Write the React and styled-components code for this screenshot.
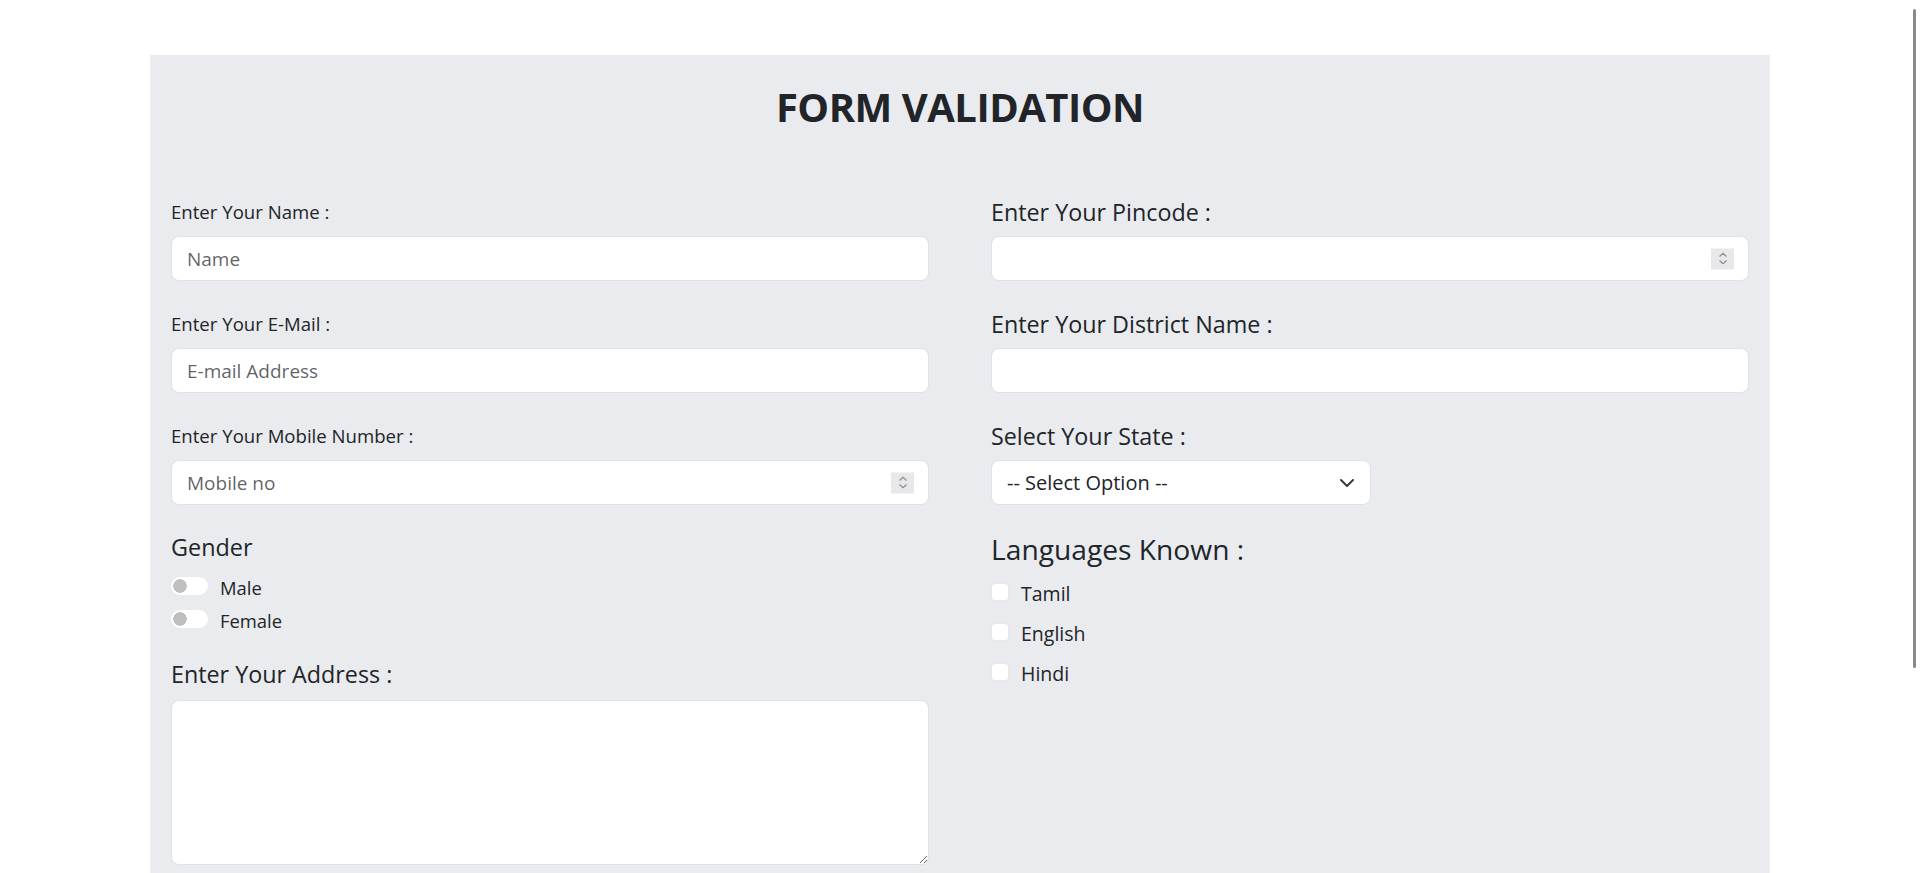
import styled, { createGlobalStyle } from "styled-components";

const GlobalStyle = createGlobalStyle`
  html {
    scrollbar-width: none;
  }
  body {
    margin: 0;
    background: #fff;
    color: #212529;
    font-family: "Open Sans", "Noto Sans", sans-serif;
  }
`;

const Page = styled.main`
  box-sizing: border-box;
  min-height: 1150px;
  padding: 55px 0 0 150px;
`;

// thin overlay scrollbar thumb seen at the right edge of the window
const ScrollThumb = styled.div`
  position: fixed;
  top: 9px;
  right: 4px;
  width: 3px;
  height: 659px;
  border-radius: 2px;
  background: #8a8a8a;
`;

const Card = styled.section`
  box-sizing: border-box;
  width: 1620px;
  padding: 28px 21px 40px;
  background: #e9ebee;
`;

const Title = styled.h1`
  margin: 0 0 59px;
  font-size: 40px;
  line-height: 48px;
  font-weight: 700;
  letter-spacing: -0.5px;
  text-align: center;
`;

const Columns = styled.div`
  display: grid;
  grid-template-columns: 1fr 1fr;
  column-gap: 62px;
  align-items: start;
`;

const Column = styled.div`
  display: flex;
  flex-direction: column;
`;

const FieldGroup = styled.div`
  margin-bottom: 21px;
`;

const Label = styled.label`
  display: block;
  font-size: ${(p) => p.$size}px;
  line-height: 44px;
  margin: ${(p) => p.$top || 0}px 0 ${(p) => p.$bottom ?? 2}px;
`;

const Heading = styled.div`
  font-size: ${(p) => p.$size}px;
  line-height: ${(p) => p.$lh}px;
`;

const fieldBase = `
  display: block;
  box-sizing: border-box;
  width: 100%;
  font-family: inherit;
  font-size: 19px;
  color: #212529;
  background: #fff;
  border: 1px solid #dee2e6;
  border-radius: 8px;
  outline: none;
`;

const TextInput = styled.input`
  ${fieldBase}
  height: 45px;
  padding: 0 15px;
  &::placeholder {
    color: rgba(33, 37, 41, 0.72);
  }
`;

const InputWrap = styled.div`
  position: relative;
  width: ${(p) => p.$width || "100%"};
`;

const Spinner = styled.span`
  position: absolute;
  right: 15px;
  top: 50%;
  transform: translateY(-50%);
  width: 23px;
  height: 21px;
  background: #e8e8eb;
  display: flex;
  align-items: center;
  justify-content: center;
  pointer-events: none;
`;

const Select = styled.select`
  ${fieldBase}
  appearance: none;
  height: 45px;
  padding: 0 48px 0 15px;
  font-size: 20px;
`;

const Chevron = styled.svg`
  position: absolute;
  right: 16px;
  top: 50%;
  transform: translateY(-50%);
  pointer-events: none;
`;

const TextArea = styled.textarea`
  ${fieldBase}
  height: 165px;
  padding: 8px 15px;
  resize: vertical;
`;

const ChoiceRow = styled.label`
  display: flex;
  align-items: center;
  height: ${(p) => p.$h}px;
  gap: 12px;
`;

const ChoiceText = styled.span`
  font-size: ${(p) => p.$size}px;
  padding-top: ${(p) => p.$shift}px;
`;

const Switch = styled.input`
  appearance: none;
  margin: 0;
  width: 37px;
  height: 18px;
  border-radius: 9px;
  background: radial-gradient(circle at 9px 50%, #bfbfbf 6.5px, transparent 7px), #fff;
`;

const Check = styled.input`
  appearance: none;
  margin: 0;
  width: 18px;
  height: 18px;
  box-sizing: border-box;
  border: 1px solid #e4e6ea;
  border-radius: 4px;
  background: #fff;
`;

function NumberSpinner() {
  return (
    <Spinner>
      <svg width="10" height="14" viewBox="0 0 10 14" fill="none" stroke="#8c8c8c" strokeWidth="1.2">
        <path d="M1.5 5 5 1.8 8.5 5" />
        <path d="M1.5 9 5 12.2 8.5 9" />
      </svg>
    </Spinner>
  );
}

const leftFields = [
  { label: "Enter Your Name :", placeholder: "Name" },
  { label: "Enter Your E-Mail :", placeholder: "E-mail Address" },
  { label: "Enter Your Mobile Number :", placeholder: "Mobile no", number: true },
];

const genders = ["Male", "Female"];
const languages = ["Tamil", "English", "Hindi"];

export default function App() {
  return (
    <>
      <GlobalStyle />
      <ScrollThumb />
      <Page>
        <Card>
          <Title>FORM VALIDATION</Title>
          <Columns>
            <Column>
              {leftFields.map((f) => (
                <FieldGroup key={f.label}>
                  <Label $size={18.6}>{f.label}</Label>
                  <InputWrap>
                    <TextInput placeholder={f.placeholder} />
                    {f.number && <NumberSpinner />}
                  </InputWrap>
                </FieldGroup>
              ))}
              <Heading $size={23.4} $lh={43}>Gender</Heading>
              {genders.map((g) => (
                <ChoiceRow key={g} $h={33}>
                  <Switch type="checkbox" role="switch" name="gender" />
                  <ChoiceText $size={18.4} $shift={4}>{g}</ChoiceText>
                </ChoiceRow>
              ))}
              <Label $size={23.3} $top={17} $bottom={4}>Enter Your Address :</Label>
              <TextArea />
            </Column>

            <Column>
              <FieldGroup>
                <Label $size={23.3}>Enter Your Pincode :</Label>
                <InputWrap>
                  <TextInput />
                  <NumberSpinner />
                </InputWrap>
              </FieldGroup>
              <FieldGroup>
                <Label $size={23.3}>Enter Your District Name :</Label>
                <TextInput />
              </FieldGroup>
              <FieldGroup>
                <Label $size={23.3}>Select Your State :</Label>
                <InputWrap $width="380px">
                  <Select defaultValue="">
                    <option value="">-- Select Option --</option>
                  </Select>
                  <Chevron width="16" height="12" viewBox="0 0 16 12" fill="none" stroke="#343a40" strokeWidth="2" strokeLinecap="round" strokeLinejoin="round">
                    <path d="m2 3 6 6 6-6" />
                  </Chevron>
                </InputWrap>
              </FieldGroup>
              <Heading $size={28.2} $lh={46}>Languages Known :</Heading>
              {languages.map((l) => (
                <ChoiceRow key={l} $h={40}>
                  <Check type="checkbox" />
                  <ChoiceText $size={19.5} $shift={2.5}>{l}</ChoiceText>
                </ChoiceRow>
              ))}
            </Column>
          </Columns>
        </Card>
      </Page>
    </>
  );
}
